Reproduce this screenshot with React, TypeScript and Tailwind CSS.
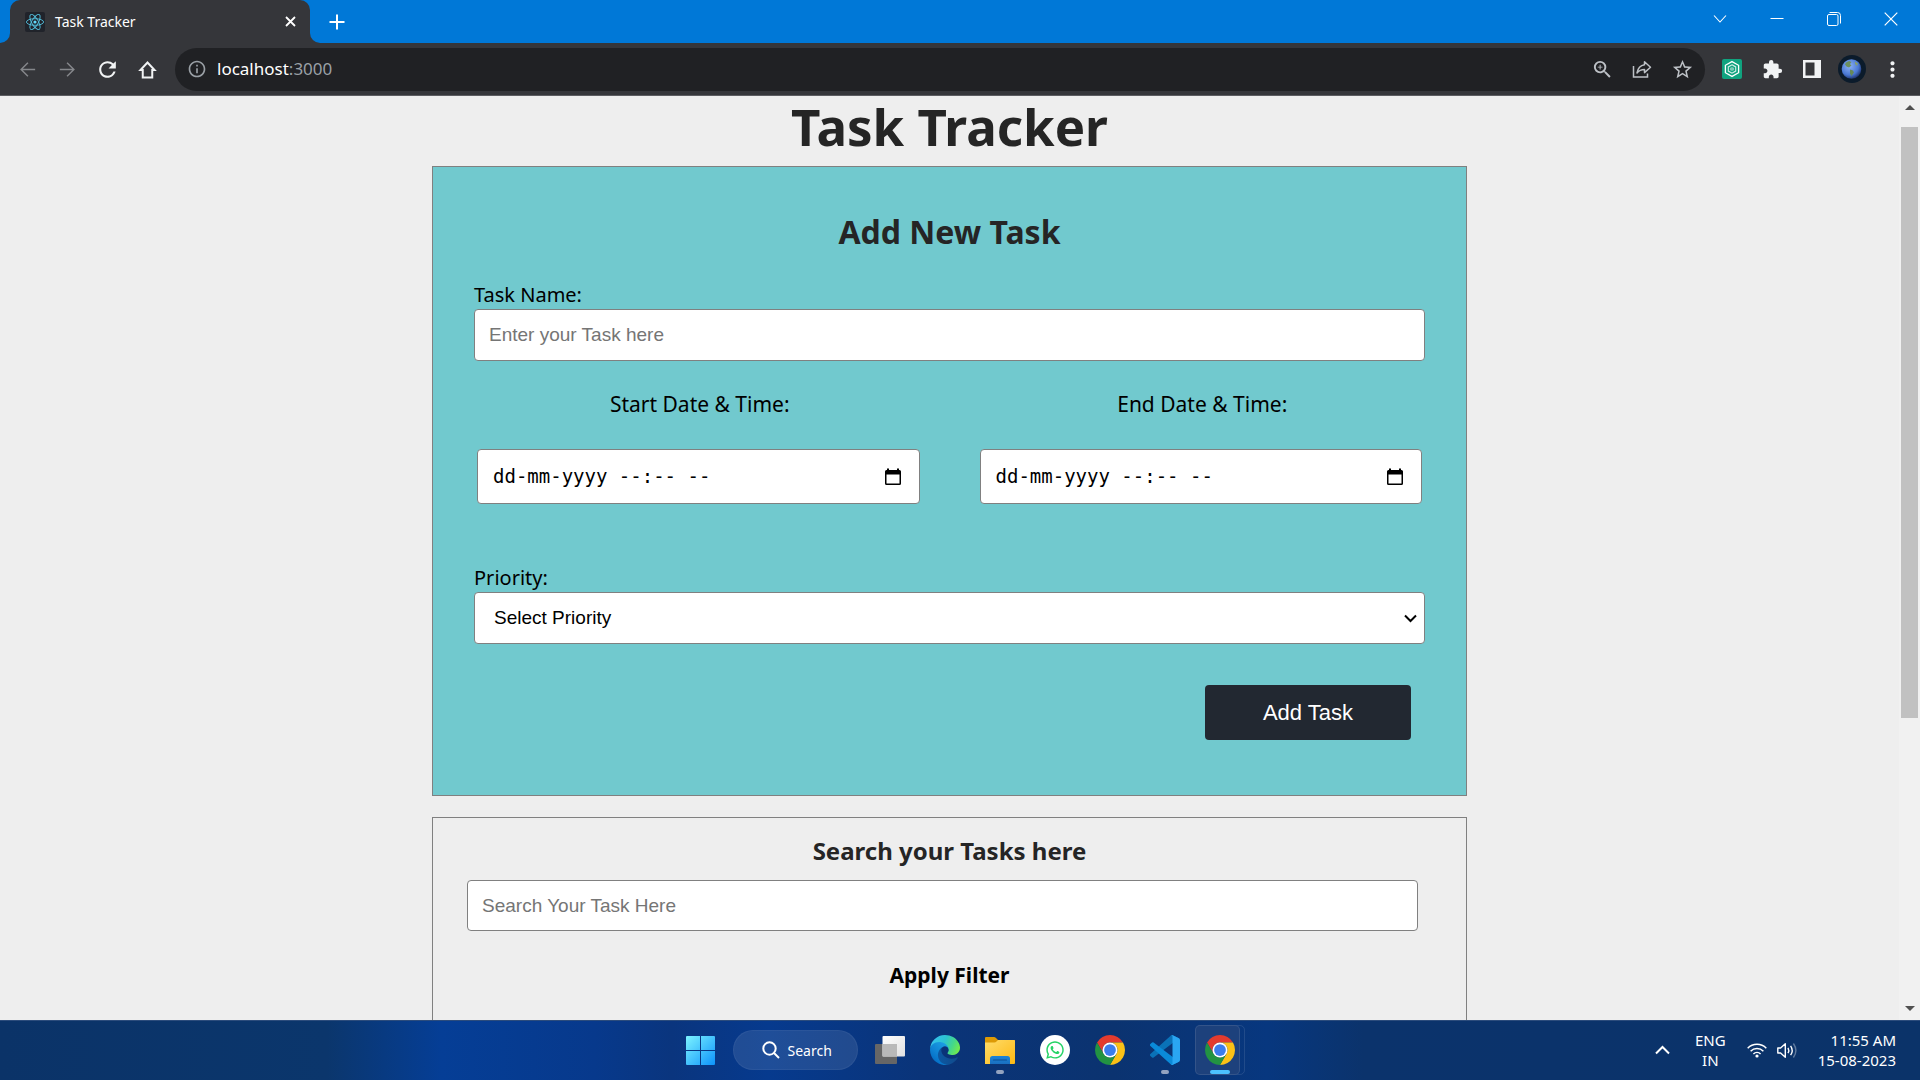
import type { ReactNode } from "react";
import { FaWhatsapp } from "react-icons/fa";
import { MdExtension, MdInfoOutline, MdMoreVert, MdRefresh, MdStarBorder, MdZoomIn } from "react-icons/md";

function ReactFavicon() {
  return (
    <svg viewBox="0 0 20 20" className="size-5 shrink-0" aria-hidden="true">
      <rect width="20" height="20" rx="2" fill="#20232a" />
      <g fill="none" stroke="#53c1de" strokeWidth="0.9">
        <ellipse cx="10" cy="10" rx="8.6" ry="3.3" />
        <ellipse cx="10" cy="10" rx="8.6" ry="3.3" transform="rotate(60 10 10)" />
        <ellipse cx="10" cy="10" rx="8.6" ry="3.3" transform="rotate(120 10 10)" />
      </g>
      <circle cx="10" cy="10" r="1.6" fill="#61dafb" />
    </svg>
  );
}

function Stroke({ d, size, width = 2, view = 20 }: { d: string; size: string; width?: number; view?: number }) {
  return (
    <svg viewBox={`0 0 ${view} ${view}`} className={size} fill="none" stroke="currentColor" strokeWidth={width} aria-hidden="true">
      <path d={d} />
    </svg>
  );
}

function TabStrip() {
  return (
    <div className="flex h-[43px] shrink-0 items-end bg-[#0078d7] text-white">
      <div className="size-[10px] bg-[#35363a]">
        <div className="size-full rounded-br-[10px] bg-[#0078d7]" />
      </div>
      <div className="flex h-[43px] w-[300px] items-center rounded-t-[10px] bg-[#35363a] pr-3 pl-[15px]">
        <ReactFavicon />
        <span className="ml-[10px] flex-1 font-['Noto_Sans','Open_Sans',sans-serif] text-[14px] leading-5">Task Tracker</span>
        <button aria-label="Close tab" className="flex size-4 items-center justify-center">
          <Stroke d="M1 1 L10 10 M10 1 L1 10" view={11} width={1.8} size="size-[11px]" />
        </button>
      </div>
      <div className="size-[10px] bg-[#35363a]">
        <div className="size-full rounded-bl-[10px] bg-[#0078d7]" />
      </div>
      <button aria-label="New tab" className="ml-2 flex h-[43px] w-[18px] items-center justify-center">
        <Stroke d="M8 0.5 V15.5 M0.5 8 H15.5" view={16} size="size-4" />
      </button>
      <div className="ml-auto flex h-[37px] items-center self-start pr-px">
        <button aria-label="Search tabs" className="flex w-[57px] justify-center">
          <Stroke d="M1 3.5 L7 10 L13 3.5" view={14} width={1.1} size="size-[14px]" />
        </button>
        <button aria-label="Minimize" className="flex w-[57px] justify-center">
          <Stroke d="M0.5 6.5 H13.5" view={14} width={1} size="size-[14px]" />
        </button>
        <button aria-label="Restore" className="flex w-[57px] justify-center">
          <svg viewBox="0 0 14 14" className="size-[14px]" fill="none" stroke="currentColor" aria-hidden="true">
            <rect x="0.5" y="2.5" width="10.5" height="11" rx="1.5" />
            <path d="M2.5 0.5 H10.5 Q13.5 0.5 13.5 3.5 V11.5" />
          </svg>
        </button>
        <button aria-label="Close" className="flex w-[57px] justify-center">
          <Stroke d="M0.7 0.7 L13.3 13.3 M13.3 0.7 L0.7 13.3" view={14} width={1.2} size="size-[14px]" />
        </button>
      </div>
    </div>
  );
}

function AddressBar() {
  return (
    <div className="flex h-[53px] shrink-0 items-center border-b border-[#5c5d61] bg-[#35363a] pr-2 pl-[7px] text-[#f1f3f4]">
      <button aria-label="Back" className="flex w-10 justify-center text-[#85878b]">
        <Stroke d="M19 10 H3 M10.5 2 L2.5 10 L10.5 18" width={1.7} size="size-[17px]" />
      </button>
      <button aria-label="Forward" className="flex w-10 justify-center text-[#85878b]">
        <Stroke d="M1 10 H17 M9.5 2 L17.5 10 L9.5 18" width={1.7} size="size-[17px]" />
      </button>
      <button aria-label="Reload" className="flex w-10 justify-center">
        <MdRefresh className="size-[25px]" />
      </button>
      <button aria-label="Home" className="flex w-10 justify-center">
        <Stroke d="M5 18.5 V10.5 H2.6 L10 2.6 L17.4 10.5 H15 V18.5 Z" width={2.1} size="size-[19px]" />
      </button>
      <div className="ml-2 flex h-[43px] flex-1 items-center rounded-full bg-[#202124] pr-[3px] pl-3 text-[#bdc1c6]">
        <MdInfoOutline className="size-5 text-[#9aa0a6]" />
        <p className="ml-[10px] flex-1 font-['Noto_Sans','Open_Sans',sans-serif] text-[17px] leading-6 text-[#9aa0a6]">
          <span className="text-white">localhost</span>:3000
        </p>
        <button aria-label="Zoom" className="flex w-10 justify-center">
          <MdZoomIn className="size-[23px]" />
        </button>
        <button aria-label="Share this page" className="flex w-10 justify-center">
          <svg viewBox="0 0 20 18" className="h-[18px] w-5" fill="none" stroke="currentColor" strokeWidth="1.5" aria-hidden="true">
            <path d="M1.5 6 V17 H15.5 V13.5" />
            <path d="M12.5 1.8 L18.5 7.2 L12.5 12.6 V9.4 C9 9.4 6.8 10.6 5 13 C5.8 8.4 8.2 5.4 12.5 4.8 Z" strokeLinejoin="round" />
          </svg>
        </button>
        <button aria-label="Bookmark this tab" className="flex w-10 justify-center">
          <MdStarBorder className="size-[23px]" />
        </button>
      </div>
      <div className="flex items-center pl-[7px]">
        <button aria-label="Extension" className="flex w-10 justify-center">
          <svg viewBox="0 0 20 20" className="size-5" aria-hidden="true">
            <rect width="20" height="20" rx="2" fill="#10a37f" />
            <path d="M10 2.6 L16.6 6.3 V13.7 L10 17.4 L3.4 13.7 V6.3 Z" fill="none" stroke="#fff" strokeWidth="1.3" />
            <path d="M10 5.8 L13.7 7.9 V12.1 L10 14.2 L6.3 12.1 V7.9 Z" fill="none" stroke="#d5efe8" strokeWidth="1.1" />
            <path d="M10 8 L12 9.1 V10.9 L10 12 L8 10.9 V9.1 Z" fill="#7cc9b5" />
          </svg>
        </button>
        <button aria-label="Extensions" className="flex w-10 justify-center">
          <MdExtension className="size-[21px]" />
        </button>
        <button aria-label="Side panel" className="flex w-10 justify-center">
          <svg viewBox="0 0 18 18" className="size-[18px]" aria-hidden="true">
            <path fillRule="evenodd" d="M0 0 H18 V18 H0 Z M2.5 2.5 V15.5 H11.5 V2.5 Z" fill="currentColor" />
          </svg>
        </button>
        <button aria-label="Profile" className="flex w-10 justify-center">
          <svg viewBox="0 0 28 28" className="size-7" aria-hidden="true">
            <defs>
              <radialGradient id="globe" cx="0.4" cy="0.35" r="0.7">
                <stop offset="0" stopColor="#8db2f4" />
                <stop offset="0.65" stopColor="#4a78d4" />
                <stop offset="1" stopColor="#1a2d62" />
              </radialGradient>
            </defs>
            <circle cx="14" cy="14" r="14" fill="#0b1b2b" />
            <circle cx="13.5" cy="14" r="9.8" fill="url(#globe)" />
            <path d="M8 7.5 L11 6 L13.5 7 L12 9 L13.5 10.5 L11 12.5 L8.5 11.5 L7 9.5 Z" fill="#6c8f5e" />
            <path d="M12 14.5 L15 15.5 L16 17.5 L13.5 21 L12 18.5 Z" fill="#66895a" />
            <path d="M17 6.5 L20 8.5 L19 11 L17 9 Z" fill="#86a06c" />
          </svg>
        </button>
        <button aria-label="Menu" className="flex w-10 justify-center">
          <MdMoreVert className="size-[25px]" />
        </button>
      </div>
    </div>
  );
}

function DateField({ id, label }: { id: string; label: string }) {
  return (
    <div className="flex-1">
      <label htmlFor={id} className="block pl-[3px] text-center text-[21px] leading-8">
        {label}
      </label>
      <div className="mx-[3px] mt-[29px] flex h-[55px] items-center rounded-[4px] border border-[#808080] bg-white pr-[18px] pl-[15px]">
        <input
          id={id}
          type="text"
          placeholder="dd-mm-yyyy --:-- --"
          className="min-w-0 flex-1 font-['DejaVu_Sans_Mono',monospace] text-[19px] outline-none placeholder:text-black"
        />
        <button type="button" aria-label={`Open calendar for ${label}`}>
          <svg viewBox="0 0 16 17" className="h-[17px] w-4" aria-hidden="true">
            <path
              fillRule="evenodd"
              d="M2 0.5 H4 V2 H12 V0.5 H14 V2 H14.5 Q16 2 16 3.5 V15.5 Q16 17 14.5 17 H1.5 Q0 17 0 15.5 V3.5 Q0 2 1.5 2 H2 Z M1.5 6.5 V15.5 H14.5 V6.5 Z"
            />
          </svg>
        </button>
      </div>
    </div>
  );
}

function AddTaskForm() {
  return (
    <form className="border border-[#808080] bg-[#71c9ce] px-[41px] pt-[41px] pb-[55px]">
      <h2 className="text-center text-[32px] leading-[48px] font-bold text-[#252525]">Add New Task</h2>
      <label htmlFor="task-name" className="mt-[25px] block text-[20px] leading-7">
        Task Name:
      </label>
      <input
        id="task-name"
        type="text"
        placeholder="Enter your Task here"
        className="block h-[52px] w-full rounded-[4px] border border-[#808080] bg-white px-[14px] font-['Liberation_Sans',Arial,sans-serif] text-[19px] outline-none placeholder:text-[#757575]"
      />
      <div className="mt-[27px] flex gap-[54px]">
        <DateField id="start-date" label="Start Date & Time:" />
        <DateField id="end-date" label="End Date & Time:" />
      </div>
      <label htmlFor="priority" className="mt-15 block text-[20px] leading-7">
        Priority:
      </label>
      <div className="relative">
        <select
          id="priority"
          className="block h-[52px] w-full appearance-none rounded-[4px] border border-[#808080] bg-white px-[19px] font-['Liberation_Sans',Arial,sans-serif] text-[19px]"
        >
          <option>Select Priority</option>
          <option>High</option>
          <option>Medium</option>
          <option>Low</option>
        </select>
        <span className="pointer-events-none absolute inset-y-0 right-2 flex items-center">
          <Stroke d="M1 3.5 L6.5 9 L12 3.5" view={13} size="size-[13px]" />
        </span>
      </div>
      <div className="mt-[41px] flex justify-end pr-[14px]">
        <button
          type="button"
          className="h-[55px] w-[206px] rounded-[4px] bg-[#222831] font-['Liberation_Sans',Arial,sans-serif] text-[22px] text-white"
        >
          Add Task
        </button>
      </div>
    </form>
  );
}

function SearchPanel() {
  return (
    <section className="mt-[21px] h-[400px] border border-[#808080] pt-[14px] pr-12 pl-[34px]">
      <h2 className="-mr-[14px] text-center text-[24px] leading-[38px] font-bold text-[#252525]">
        <label htmlFor="search-task">Search your Tasks here</label>
      </h2>
      <input
        id="search-task"
        type="text"
        placeholder="Search Your Task Here"
        className="mt-[10px] block h-[51px] w-full rounded-[4px] border border-[#808080] bg-white px-[14px] font-['Liberation_Sans',Arial,sans-serif] text-[19px] outline-none placeholder:text-[#757575]"
      />
      <h3 className="mt-7 -mr-[14px] text-center text-[21px] leading-8 font-bold">Apply Filter</h3>
    </section>
  );
}

function Scrollbar() {
  return (
    <div className="flex w-[21px] flex-col items-center justify-between bg-[#f1f1f1]" aria-hidden="true">
      <svg viewBox="0 0 10 5" className="mt-[9px] h-[5px] w-[10px] shrink-0">
        <path d="M0 5 L5 0 L10 5 Z" fill="#505050" />
      </svg>
      <div className="mt-[17px] w-[17px] flex-[591] bg-[#c1c1c1]" />
      <div className="flex-[288]" />
      <svg viewBox="0 0 10 5" className="mb-[9px] h-[5px] w-[10px] shrink-0">
        <path d="M0 0 L5 5 L10 0 Z" fill="#505050" />
      </svg>
    </div>
  );
}

function ChromeLogo() {
  return (
    <svg viewBox="0 0 48 48" className="size-[30px]" aria-hidden="true">
      <path d="M3.22 12 A24 24 0 0 1 44.78 12 H24 A12 12 0 0 0 13.61 30 Z" fill="#e33b2e" />
      <path d="M44.78 12 A24 24 0 0 1 24 48 L34.39 30 A12 12 0 0 0 24 12 Z" fill="#fbc116" />
      <path d="M24 48 A24 24 0 0 1 3.22 12 L13.61 30 A12 12 0 0 0 34.39 30 Z" fill="#229342" />
      <circle cx="24" cy="24" r="12" fill="#fff" />
      <circle cx="24" cy="24" r="9.4" fill="#3b7ded" />
    </svg>
  );
}

function EdgeLogo() {
  return (
    <svg viewBox="0 0 256 256" className="size-[30px]" aria-hidden="true">
      <defs>
        <linearGradient id="edge-a" x1="0" y1="0" x2="1" y2="0">
          <stop offset="0" stopColor="#0c59a4" />
          <stop offset="1" stopColor="#114a8b" />
        </linearGradient>
        <linearGradient id="edge-b" x1="0.8" y1="0.2" x2="0.2" y2="1">
          <stop offset="0" stopColor="#1b9de2" />
          <stop offset="0.5" stopColor="#0f83d4" />
          <stop offset="1" stopColor="#0067c0" />
        </linearGradient>
        <linearGradient id="edge-c" x1="0" y1="0.3" x2="1" y2="0.6">
          <stop offset="0" stopColor="#35c1f1" />
          <stop offset="0.45" stopColor="#2cc3d0" />
          <stop offset="0.75" stopColor="#45d888" />
          <stop offset="1" stopColor="#72ea4d" />
        </linearGradient>
      </defs>
      <path fill="url(#edge-a)" d="M231.07 190.54c-3.4 1.78-6.91 3.35-10.53 4.7a101.92 101.92 0 0 1-35.9 6.46c-47.32 0-88.54-32.55-88.54-74.32A31.48 31.48 0 0 1 112.53 100.11c-42.8 1.8-53.8 46.4-53.8 72.53 0 73.88 68.09 81.37 82.76 81.37 7.91 0 19.84-2.3 27-4.56l1.31-.44a128.34 128.34 0 0 0 66.6-52.8 4 4 0 0 0-5.33-5.67z" />
      <path fill="url(#edge-b)" d="M105.73 241.42a79.2 79.2 0 0 1-22.74-21.34 80.72 80.72 0 0 1 29.54-120c3.12-1.47 8.45-4.13 15.54-4a32.35 32.35 0 0 1 25.69 13 31.88 31.88 0 0 1 6.36 18.66c0-.21 24.46-79.6-80-79.6-43.9 0-80 41.66-80 78.21a130.15 130.15 0 0 0 12.11 56 128 128 0 0 0 156.38 67.11 75.55 75.55 0 0 1-62.78-8z" />
      <path fill="url(#edge-c)" d="M152.33 148.86c-.81 1.05-3.3 2.5-3.3 5.66 0 2.61 1.7 5.12 4.72 7.23 14.38 10 41.49 8.68 41.56 8.68a59.56 59.56 0 0 0 30.27-8.35A61.38 61.38 0 0 0 256 109.16c.26-22.41-8-37.31-11.34-43.91C223.46 23.84 177.72 0 128 0A128 128 0 0 0 0 126.2c.48-36.54 36.8-66.05 80-66.05 3.5 0 23.46.34 42 10.07 16.34 8.58 24.9 18.94 30.85 29.21 6.18 10.67 7.28 24.15 7.28 29.52s-2.74 13.33-7.8 19.91z" />
    </svg>
  );
}

function VsCodeLogo() {
  return (
    <svg viewBox="0 0 100 100" className="size-[30px]" aria-hidden="true">
      <path fill="#0a72b8" d="M96.46 10.8L75.86.88A6.23 6.23 0 0 0 68.75 2.09L1.3 63.59a4.17 4.17 0 0 0 0 6.16l5.51 5.01a4.17 4.17 0 0 0 5.32.24l81.23-61.62C96.08 11.32 100 13.26 100 16.67v-.24a6.25 6.25 0 0 0-3.54-5.63z" />
      <path fill="#0a8ad8" d="M96.46 89.2L75.86 99.12a6.23 6.23 0 0 1-7.11-1.21L1.3 36.41a4.17 4.17 0 0 1 0-6.16l5.51-5.01a4.17 4.17 0 0 1 5.32-.24l81.23 61.62C96.08 88.69 100 86.74 100 83.33v.24a6.25 6.25 0 0 1-3.54 5.63z" />
      <path fill="#2aa6f2" d="M75.86 99.13a6.23 6.23 0 0 1-7.11-1.21C71.06 100.22 75 98.59 75 95.33V4.67c0-3.26-3.94-4.89-6.25-2.59A6.23 6.23 0 0 1 75.86.87l20.6 9.91A6.25 6.25 0 0 1 100 16.41v67.18a6.25 6.25 0 0 1-3.54 5.63z" />
    </svg>
  );
}

function WindowsLogo() {
  return (
    <svg viewBox="0 0 29 29" className="size-[29px]" aria-hidden="true">
      <defs>
        <linearGradient id="win" gradientUnits="userSpaceOnUse" x1="0" y1="0" x2="29" y2="29">
          <stop offset="0" stopColor="#7cf3ff" />
          <stop offset="1" stopColor="#0d93fb" />
        </linearGradient>
      </defs>
      <path fill="url(#win)" d="M1 0H14V14H0V1Q0 0 1 0Z M15 0H28Q29 0 29 1V14H15Z M0 15H14V29H1Q0 29 0 28Z M15 15H29V28Q29 29 28 29H15Z" />
    </svg>
  );
}

function TaskViewIcon() {
  return (
    <svg viewBox="0 0 30 28" className="h-7 w-[30px]" aria-hidden="true">
      <defs>
        <linearGradient id="tv" x1="0" y1="0" x2="1" y2="1">
          <stop offset="0" stopColor="#ffffff" />
          <stop offset="1" stopColor="#e0e0e0" />
        </linearGradient>
      </defs>
      <rect y="8" width="22" height="20" rx="1" fill="#666" />
      <rect x="7.5" width="22.5" height="20.5" rx="1" fill="url(#tv)" />
      <rect x="7.5" y="8" width="14.5" height="12.5" fill="#b9b9b9" />
    </svg>
  );
}

function ExplorerIcon() {
  return (
    <svg viewBox="0 0 30 27" className="h-[27px] w-[30px]" aria-hidden="true">
      <defs>
        <linearGradient id="folder" x1="0" y1="0" x2="1" y2="1">
          <stop offset="0" stopColor="#ffdc6a" />
          <stop offset="1" stopColor="#fdb913" />
        </linearGradient>
        <linearGradient id="tray" x1="0" y1="0" x2="0" y2="1">
          <stop offset="0" stopColor="#1b84d8" />
          <stop offset="1" stopColor="#1a6fc0" />
        </linearGradient>
      </defs>
      <path d="M0 1 Q0 0 1 0 H9 Q10 0 11 1 L13 3 H29 Q30 3 30 4 V9 H0 Z" fill="#dd9a05" />
      <path d="M0 5.5 H9.5 Q10.5 5.5 11.5 4.5 L13 3 H29 Q30 3 30 4 V26 Q30 27 29 27 H0 Z" fill="url(#folder)" />
      <path d="M5 27 V21.5 Q5 19 7.5 19 H22.5 Q25 19 25 21.5 V27 Z" fill="url(#tray)" />
      <path d="M8.5 23 H21.5" stroke="#0d4f94" strokeWidth="1.2" strokeLinecap="round" />
    </svg>
  );
}

function TaskbarApp({ label, children, state }: { label: string; children: ReactNode; state?: "open" | "active" }) {
  return (
    <button aria-label={label} className="relative flex h-[60px] w-[55px] items-center justify-center">
      {state === "active" && (
        <>
          <span className="absolute top-[5px] left-3 h-[50px] w-[40px] rounded-[5px] border border-white/10" />
          <span className="absolute top-[5px] left-[2px] h-[50px] w-[45px] rounded-[5px] border border-white/10 bg-[#1d417c]" />
          <span className="absolute bottom-[6px] h-1 w-5 rounded-full bg-[#4cc2ff]" />
        </>
      )}
      {state === "open" && <span className="absolute bottom-[6px] h-1 w-2 rounded-full bg-[#93a3c0]" />}
      <span className="relative">{children}</span>
    </button>
  );
}

function Taskbar() {
  return (
    <footer className="grid h-[60px] shrink-0 grid-cols-[1fr_auto_1fr] items-center bg-[linear-gradient(90deg,#0b3368_0%,#0b366c_17%,#053e96_23%,#07398c_31%,#0a357e_35%,#063a8e_40%,#0a3479_48%,#0b3370_58%,#07377f_66%,#0b336c_71%,#0b3369_100%)] font-['Noto_Sans','Open_Sans',sans-serif] text-white shadow-[inset_0_1px_0_#2c4c7c]">
      <div />
      <div className="flex items-center">
        <TaskbarApp label="Start">
          <WindowsLogo />
        </TaskbarApp>
        <button className="mx-[5px] flex h-10 w-[125px] items-center rounded-full border border-white/5 bg-white/10 pl-7 text-[14px]">
          <svg viewBox="0 0 18 18" className="mr-2 size-[18px]" fill="none" stroke="currentColor" strokeWidth="2" aria-hidden="true">
            <circle cx="7.5" cy="7.5" r="6.2" />
            <path d="M12 12 L17 17" />
          </svg>
          Search
        </button>
        <TaskbarApp label="Task view">
          <TaskViewIcon />
        </TaskbarApp>
        <TaskbarApp label="Edge">
          <EdgeLogo />
        </TaskbarApp>
        <TaskbarApp label="File Explorer" state="open">
          <ExplorerIcon />
        </TaskbarApp>
        <TaskbarApp label="WhatsApp">
          <span className="flex size-[30px] items-center justify-center rounded-full bg-white">
            <FaWhatsapp className="size-5 text-[#25d366]" />
          </span>
        </TaskbarApp>
        <TaskbarApp label="Chrome">
          <ChromeLogo />
        </TaskbarApp>
        <TaskbarApp label="Visual Studio Code" state="open">
          <VsCodeLogo />
        </TaskbarApp>
        <TaskbarApp label="Chrome, Task Tracker" state="active">
          <ChromeLogo />
        </TaskbarApp>
      </div>
      <div className="flex items-center justify-end pr-6 text-[15px] leading-5">
        <button aria-label="Show hidden icons">
          <Stroke d="M1 10.5 L7.5 4 L14 10.5" view={15} size="size-[15px]" />
        </button>
        <p className="ml-[25px] text-center">
          ENG
          <br />
          IN
        </p>
        <svg viewBox="0 0 20 16" className="ml-[21px] h-4 w-5" fill="none" stroke="currentColor" strokeWidth="1.5" aria-hidden="true">
          <path d="M0.7 6.2 A13 13 0 0 1 19.3 6.2" />
          <path d="M3.6 9.2 A9 9 0 0 1 16.4 9.2" />
          <path d="M6.4 12 A5.2 5.2 0 0 1 13.6 12" />
          <circle cx="10" cy="14" r="1.6" fill="currentColor" stroke="none" />
        </svg>
        <svg viewBox="0 0 21 17" className="ml-[10px] h-[17px] w-[21px]" fill="none" stroke="currentColor" strokeWidth="1.4" aria-hidden="true">
          <path d="M0.8 6 H3.6 L8.3 1.8 V15.2 L3.6 11 H0.8 Z" strokeLinejoin="round" />
          <path d="M11 5.8 Q12.6 8.5 11 11.2" />
          <path d="M13.6 3.8 Q16.8 8.5 13.6 13.2" />
          <path d="M16.4 1.5 Q21.4 8.5 16.4 15.5" opacity="0.35" />
        </svg>
        <p className="ml-5 text-right">
          11:55 AM
          <br />
          15-08-2023
        </p>
      </div>
    </footer>
  );
}

export default function App() {
  return (
    <div className="flex h-screen flex-col overflow-hidden bg-[#eeeeee]">
      <TabStrip />
      <AddressBar />
      <div className="flex min-h-0 flex-1">
        <main className="flex-1 overflow-hidden font-['Noto_Sans','Open_Sans',sans-serif] text-black">
          <h1 className="h-[70px] text-center text-[51px] leading-[60px] font-bold text-[#252525]">Task Tracker</h1>
          <div className="mx-auto w-[54.5%]">
            <AddTaskForm />
            <SearchPanel />
          </div>
        </main>
        <Scrollbar />
      </div>
      <Taskbar />
    </div>
  );
}
